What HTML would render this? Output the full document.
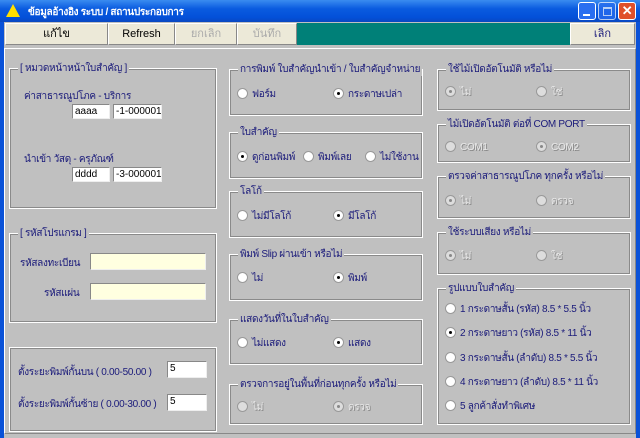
<!DOCTYPE html>
<html><head><meta charset="utf-8"><style>
*{margin:0;padding:0;box-sizing:border-box}
body{width:640px;height:438px;overflow:hidden;background:#c0c0c0;font-family:"Liberation Sans","Noto Sans CJK SC",sans-serif;font-size:10px;letter-spacing:-0.3px;color:#1a1a7a;position:relative}
.a{position:absolute;white-space:nowrap}
#title{left:0;top:0;width:640px;height:22px;background:linear-gradient(#3a8cf0,#0a5be0 40%,#0350d8 80%,#0a48c0)}
.lb{left:0;top:22px;width:4px;height:416px;background:#0a52d8}
.rb{left:636px;top:22px;width:4px;height:416px;background:#0a52d8}
.tb{top:23px;height:22px;background:#ece9d8;border:1px solid #fff;border-right-color:#888;border-bottom-color:#888;text-align:center;line-height:20px;color:#000;font-size:11px;letter-spacing:0}
.g{position:absolute;border:1px solid #fff;outline:1px solid #8a8a8a;outline-offset:-2px}
.gt{position:absolute;top:-7px;left:8px;background:#c0c0c0;padding:0 2px;line-height:13px;white-space:nowrap}
.in{position:absolute;background:#fff;border:1px solid #888;border-right-color:#eee;border-bottom-color:#eee;color:#000;padding-left:2px;line-height:14px;font-size:10px;white-space:nowrap;overflow:hidden;letter-spacing:0}
.r{position:absolute;white-space:nowrap;line-height:12px}
.r i{display:inline-block;width:11px;height:11px;border-radius:50%;background:#fff;border:1px solid #999;vertical-align:-2px;margin-right:4px;position:relative}
.r i.c:after{content:"";position:absolute;left:3px;top:3px;width:3px;height:3px;background:#000;border-radius:50%}
.d{color:#e8e8e8;text-shadow:1px 1px #888}
.d i{background:#ddd}
.d i.c:after{background:#888}
</style></head><body>
<div class="a" id="title"></div>
<div class="a" style="left:6px;top:4px;width:0;height:0;border-left:7px solid transparent;border-right:7px solid transparent;border-bottom:13px solid #ffe000"></div>
<div class="a" style="left:28px;top:5px;color:#fff;font-weight:bold;font-size:10px">ข้อมูลอ้างอิง ระบบ / สถานประกอบการ</div>
<div class="a" style="left:578px;top:2px;width:18px;height:18px;border-radius:3px;background:#2a6ef0;border:1px solid #fff"><div class="a" style="left:4px;top:11px;width:7px;height:2px;background:#fff"></div></div>
<div class="a" style="left:598px;top:2px;width:18px;height:18px;border-radius:3px;background:#2a6ef0;border:1px solid #fff;opacity:.7"><div class="a" style="left:4px;top:4px;width:9px;height:9px;border:1px solid #fff;border-top-width:2px"></div></div>
<div class="a" style="left:618px;top:2px;width:18px;height:18px;border-radius:3px;background:#e0502a;border:1px solid #fff;color:#fff;font-weight:bold;text-align:center;line-height:16px;font-size:13px">✕</div>
<div class="a lb"></div><div class="a rb"></div>
<div class="a" style="left:4px;top:22px;width:632px;height:25px;background:#c0c0c0"></div>
<div class="a tb" style="left:5px;width:103px">แก้ไข</div>
<div class="a tb" style="left:108px;width:67px">Refresh</div>
<div class="a tb" style="left:175px;width:62px;color:#aaa">ยกเลิก</div>
<div class="a tb" style="left:237px;width:60px;color:#aaa">บันทึก</div>
<div class="a" style="left:297px;top:23px;width:273px;height:22px;background:#008078"></div>
<div class="a tb" style="left:570px;width:65px;color:#1a1a7a">เลิก</div>
<div class="a" style="left:4px;top:48px;width:632px;height:386px;border:1px solid #fff;border-right-color:#888;border-bottom-color:#888"></div>

<div class="g" style="left:9px;top:68px;width:208px;height:141px"><div class="gt">[ หมวดหน้าหน้าใบสำคัญ ]</div></div>
<div class="a" style="left:24px;top:89px">ค่าสาธารณูปโภค - บริการ</div>
<div class="in" style="left:72px;top:104px;width:38px;height:15px">aaaa</div>
<div class="in" style="left:113px;top:104px;width:49px;height:15px">-1-000001</div>
<div class="a" style="left:24px;top:152px">นำเข้า วัสดุ - ครุภัณฑ์</div>
<div class="in" style="left:72px;top:167px;width:38px;height:15px">dddd</div>
<div class="in" style="left:113px;top:167px;width:49px;height:15px">-3-000001</div>

<div class="g" style="left:9px;top:233px;width:208px;height:90px"><div class="gt">[ รหัสโปรแกรม ]</div></div>
<div class="a" style="left:20px;top:256px">รหัสลงทะเบียน</div>
<div class="in" style="left:90px;top:253px;width:116px;height:17px;background:#ffffe0"></div>
<div class="a" style="left:44px;top:286px">รหัสแผ่น</div>
<div class="in" style="left:90px;top:283px;width:116px;height:17px;background:#ffffe0"></div>

<div class="g" style="left:9px;top:347px;width:208px;height:85px"></div>
<div class="a" style="left:18px;top:365px">ตั้งระยะพิมพ์กั้นบน ( 0.00-50.00 )</div>
<div class="in" style="left:167px;top:361px;width:40px;height:17px">5</div>
<div class="a" style="left:18px;top:397px">ตั้งระยะพิมพ์กั้นซ้าย ( 0.00-30.00 )</div>
<div class="in" style="left:167px;top:394px;width:40px;height:17px">5</div>

<div class="g" style="left:229px;top:69px;width:194px;height:47px"><div class="gt">การพิมพ์ ใบสำคัญนำเข้า / ใบสำคัญจำหน่าย</div></div>
<div class="r" style="left:237px;top:88px"><i></i>ฟอร์ม</div>
<div class="r" style="left:333px;top:88px"><i class="c"></i>กระดาษเปล่า</div>
<div class="g" style="left:229px;top:132px;width:194px;height:47px"><div class="gt">ใบสำคัญ</div></div>
<div class="r" style="left:237px;top:151px"><i class="c"></i>ดูก่อนพิมพ์</div>
<div class="r" style="left:303px;top:151px"><i></i>พิมพ์เลย</div>
<div class="r" style="left:365px;top:151px"><i></i>ไม่ใช้งาน</div>
<div class="g" style="left:229px;top:191px;width:194px;height:47px"><div class="gt">โลโก้</div></div>
<div class="r" style="left:237px;top:210px"><i></i>ไม่มีโลโก้</div>
<div class="r" style="left:333px;top:210px"><i class="c"></i>มีโลโก้</div>
<div class="g" style="left:229px;top:254px;width:194px;height:47px"><div class="gt">พิมพ์ Slip ผ่านเข้า หรือไม่</div></div>
<div class="r" style="left:237px;top:272px"><i></i>ไม่</div>
<div class="r" style="left:333px;top:272px"><i class="c"></i>พิมพ์</div>
<div class="g" style="left:229px;top:319px;width:194px;height:46px"><div class="gt">แสดงวันที่ในใบสำคัญ</div></div>
<div class="r" style="left:237px;top:337px"><i></i>ไม่แสดง</div>
<div class="r" style="left:333px;top:337px"><i class="c"></i>แสดง</div>
<div class="g" style="left:229px;top:384px;width:194px;height:41px"><div class="gt">ตรวจการอยู่ในพื้นที่ก่อนทุกครั้ง หรือไม่</div></div>
<div class="r d" style="left:237px;top:401px"><i></i>ไม่</div>
<div class="r d" style="left:333px;top:401px"><i class="c"></i>ตรวจ</div>

<div class="g" style="left:437px;top:69px;width:194px;height:42px"><div class="gt">ใช้ไม้เปิดอัตโนมัติ หรือไม่</div></div>
<div class="r d" style="left:445px;top:86px"><i class="c"></i>ไม่</div>
<div class="r d" style="left:536px;top:86px"><i></i>ใช่</div>
<div class="g" style="left:437px;top:124px;width:194px;height:39px"><div class="gt">ไม้เปิดอัตโนมัติ ต่อที่ COM PORT</div></div>
<div class="r d" style="left:445px;top:141px"><i></i>COM1</div>
<div class="r d" style="left:536px;top:141px"><i class="c"></i>COM2</div>
<div class="g" style="left:437px;top:176px;width:194px;height:43px"><div class="gt">ตรวจค่าสาธารณูปโภค ทุกครั้ง หรือไม่</div></div>
<div class="r d" style="left:445px;top:195px"><i class="c"></i>ไม่</div>
<div class="r d" style="left:536px;top:195px"><i></i>ตรวจ</div>
<div class="g" style="left:437px;top:232px;width:194px;height:43px"><div class="gt">ใช้ระบบเสียง หรือไม่</div></div>
<div class="r d" style="left:445px;top:250px"><i class="c"></i>ไม่</div>
<div class="r d" style="left:536px;top:250px"><i></i>ใช่</div>
<div class="g" style="left:437px;top:288px;width:194px;height:137px"><div class="gt">รูปแบบใบสำคัญ</div></div>
<div class="r" style="left:445px;top:303px"><i></i>1 กระดาษสั้น (รหัส) 8.5 * 5.5 นิ้ว</div>
<div class="r" style="left:445px;top:327px"><i class="c"></i>2 กระดาษยาว (รหัส) 8.5 * 11 นิ้ว</div>
<div class="r" style="left:445px;top:352px"><i></i>3 กระดาษสั้น (ลำดับ) 8.5 * 5.5 นิ้ว</div>
<div class="r" style="left:445px;top:376px"><i></i>4 กระดาษยาว (ลำดับ) 8.5 * 11 นิ้ว</div>
<div class="r" style="left:445px;top:400px"><i></i>5 ลูกค้าสั่งทำพิเศษ</div>
</body></html>
